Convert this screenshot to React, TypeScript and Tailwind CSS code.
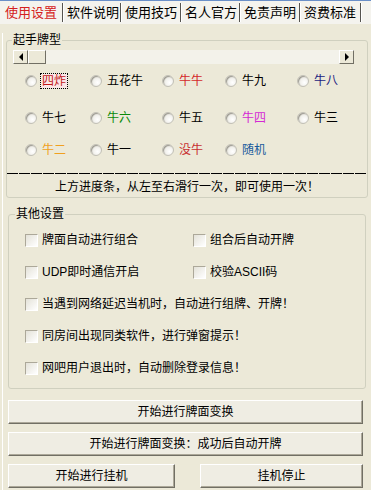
import type { ReactNode } from "react";

const tabs = [
  { label: "使用设置", w: "w-[62px]", active: true },
  { label: "软件说明", w: "w-[58px]" },
  { label: "使用技巧", w: "w-[60px]" },
  { label: "名人官方", w: "w-[59px]" },
  { label: "免责声明", w: "w-[60px]" },
  { label: "资费标准", w: "w-[61px]" },
];

const radioRows = [
  {
    mt: "mt-[7px]",
    items: [
      { t: "四炸", c: "text-[#c01818]", focus: true },
      { t: "五花牛", c: "text-black" },
      { t: "牛牛", c: "text-[#d42a2a]" },
      { t: "牛九", c: "text-black" },
      { t: "牛八", c: "text-[#1c1c80]" },
    ],
  },
  {
    mt: "mt-[17px]",
    items: [
      { t: "牛七", c: "text-black" },
      { t: "牛六", c: "text-[#0a8a0a]" },
      { t: "牛五", c: "text-black" },
      { t: "牛四", c: "text-[#d428d4]" },
      { t: "牛三", c: "text-black" },
    ],
  },
  {
    mt: "mt-[12px]",
    items: [
      { t: "牛二", c: "text-[#f0a020]" },
      { t: "牛一", c: "text-black" },
      { t: "没牛", c: "text-[#c83030]" },
      { t: "随机", c: "text-[#1a5c9c]" },
    ],
  },
];

function Radio() {
  return (
    <span className="w-[12px] h-[12px] shrink-0 rounded-full border border-[#c2c0b6] bg-[radial-gradient(circle_at_65%_65%,#ffffff,#e2e0d6)] shadow-[inset_1px_1px_1px_#9a988e]" />
  );
}

function Check() {
  return (
    <span className="w-[13px] h-[13px] shrink-0 border-t border-l border-[#aca899] border-b border-r border-b-white border-r-white bg-[linear-gradient(135deg,#e4e2d8,#ffffff)]" />
  );
}

function CheckRow({ children, mt }: { children: ReactNode; mt: string }) {
  return <div className={`${mt} h-[20px] flex items-center ml-[16px]`}>{children}</div>;
}

function CheckItem({ label, w }: { label: string; w?: string }) {
  return (
    <div className={`flex items-center gap-[4px] ${w ?? ""}`}>
      <Check />
      <span>{label}</span>
    </div>
  );
}

function Btn({ label, cls }: { label: string; cls: string }) {
  return (
    <div
      className={`${cls} h-[24px] flex items-center justify-center bg-[#efede3] border-t border-l border-white border-b border-r border-b-[#716f64] border-r-[#716f64] shadow-[inset_-1px_-1px_0_#aca899]`}
    >
      {label}
    </div>
  );
}

function ArrowBtn({ dir }: { dir: "l" | "r" }) {
  return (
    <div className="w-[15px] h-[14px] flex items-center justify-center bg-[#ece9d8] border-t border-l border-white border-b border-r border-b-[#716f64] border-r-[#716f64]">
      {dir === "l" ? (
        <span className="w-0 h-0 border-y-[4px] border-y-transparent border-r-[4px] border-r-black" />
      ) : (
        <span className="w-0 h-0 border-y-[4px] border-y-transparent border-l-[4px] border-l-black" />
      )}
    </div>
  );
}

export default function App() {
  return (
    <div className="w-[371px] h-[490px] overflow-hidden bg-[#ece9d8] text-[12px] leading-[14px] text-black font-['Liberation_Sans','Noto_Sans_CJK_SC',sans-serif]">
      <div className="h-[1px] bg-[#6a8fc8]" />
      {/* tab strip */}
      <div className="h-[23px] flex items-center pl-[1px] bg-[#f4f3ee]">
        {tabs.map((t) => (
          <div
            key={t.label}
            className={`${t.w} h-[19px] flex items-center pl-[4px] text-[13px] border-r border-r-[#555450] shadow-[1px_0_0_#ffffff] ${
              t.active ? "text-[#d42020]" : "text-black"
            }`}
          >
            {t.label}
          </div>
        ))}
      </div>

      <div className="pl-[2px]">
        <div className="border-l border-white h-[466px]">
          {/* 起手牌型 */}
          <fieldset className="mt-[9px] ml-[3px] w-[359px] border border-[#d0d0bf] rounded-[3px] px-0 pb-[3px]">
            <legend className="ml-[5px] px-[1px] text-[12px] leading-[14px]">起手牌型</legend>
            <div className="mt-[3px] ml-[6px] w-[341px] h-[14px] flex bg-[#f3f2ea] bg-[radial-gradient(#dcdad0_0.6px,transparent_0.7px)] bg-[length:2px_2px]">
              <ArrowBtn dir="l" />
              <div className="w-[18px] h-[14px] bg-[#ece9d8] border-t border-l border-white border-b border-r border-b-[#716f64] border-r-[#716f64]" />
              <div className="flex-1" />
              <ArrowBtn dir="r" />
            </div>

            {radioRows.map((row, i) => (
              <div
                key={i}
                className={`${row.mt} h-[20px] ml-[18px] grid grid-cols-[65px_72px_63px_72px_70px] items-center`}
              >
                {row.items.map((it) => (
                  <div key={it.t} className="flex items-center gap-[4px]">
                    <Radio />
                    <span
                      className={`${it.c} px-[1px] ${
                        it.focus ? "outline outline-1 outline-dotted outline-black bg-[#fbe6e6]" : ""
                      }`}
                    >
                      {it.t}
                    </span>
                  </div>
                ))}
              </div>
            ))}

            <div className="mt-[13px] h-[1px] bg-[repeating-linear-gradient(90deg,#000_0_11px,transparent_11px_12px)]" />
            <div className="mt-[6px] text-center">上方进度条，从左至右滑行一次，即可使用一次！</div>
          </fieldset>

          {/* 其他设置 */}
          <fieldset className="mt-[9px] ml-[5px] w-[358px] border border-[#d0d0bf] rounded-[3px] px-0 pb-[10px]">
            <legend className="ml-[6px] px-[1px] text-[12px] leading-[14px]">其他设置</legend>
            <CheckRow mt="mt-[9px]">
              <CheckItem label="牌面自动进行组合" w="w-[168px]" />
              <CheckItem label="组合后自动开牌" />
            </CheckRow>
            <CheckRow mt="mt-[12px]">
              <CheckItem label="UDP即时通信开启" w="w-[168px]" />
              <CheckItem label="校验ASCII码" />
            </CheckRow>
            <CheckRow mt="mt-[12px]">
              <CheckItem label="当遇到网络延迟当机时，自动进行组牌、开牌！" />
            </CheckRow>
            <CheckRow mt="mt-[12px]">
              <CheckItem label="同房间出现同类软件，进行弹窗提示！" />
            </CheckRow>
            <CheckRow mt="mt-[12px]">
              <CheckItem label="网吧用户退出时，自动删除登录信息！" />
            </CheckRow>
          </fieldset>

          {/* buttons */}
          <div className="ml-[5px] w-[355px] mt-[11px] flex flex-col gap-[8px]">
            <Btn label="开始进行牌面变换" cls="w-full" />
            <Btn label="开始进行牌面变换：成功后自动开牌" cls="w-full" />
            <div className="flex justify-between">
              <Btn label="开始进行挂机" cls="w-[167px]" />
              <Btn label="挂机停止" cls="w-[163px]" />
            </div>
          </div>
        </div>
      </div>
    </div>
  );
}
